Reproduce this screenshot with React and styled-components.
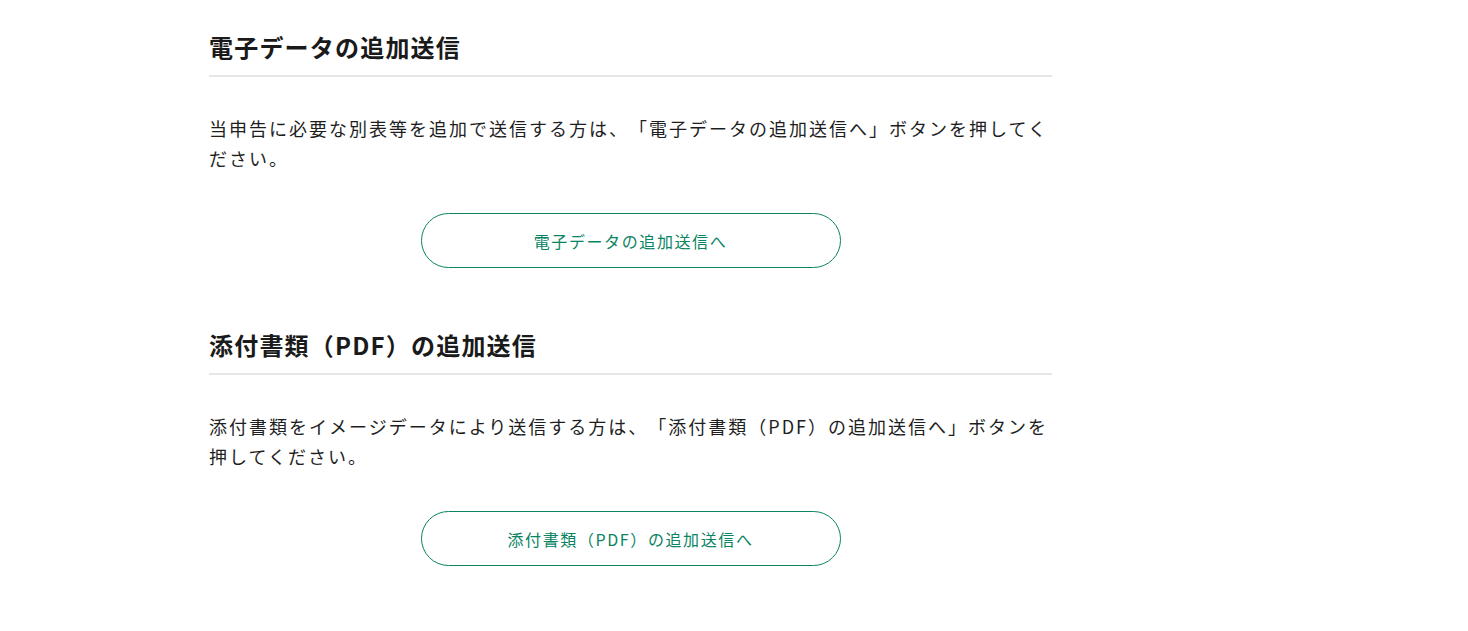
import React from "react";
import styled, { createGlobalStyle } from "styled-components";

const GlobalStyle = createGlobalStyle`
    body {
        margin: 0;
        background: #ffffff;
        font-family: "Noto Sans CJK JP", "Noto Sans", sans-serif;
        color: #222222;
        text-spacing-trim: space-all;
    }
`;

const StyledPage = styled.div`
    display: flex;
    flex-direction: column;
    width: 843px;
    margin-left: 209px;
    padding-top: 29px;
    height: 631px;
    overflow: hidden;
    box-sizing: border-box;
`;

const StyledSection = styled.section`
    display: flex;
    flex-direction: column;
    margin-bottom: 59px;
`;

const StyledHeading = styled.h2`
    margin: 0;
    padding-bottom: 10px;
    font-size: 24px;
    line-height: 36px;
    font-weight: bold;
    letter-spacing: 0.05em;
    color: #1a1a1a;
    border-bottom: 2px solid #e3e7e7;
`;

const StyledText = styled.p`
    margin: 36px 0 0 0;
    font-size: 18px;
    line-height: 30px;
    letter-spacing: 2px;
    color: #1e1e1e;
`;

// lines break where the original page breaks them
const StyledLine = styled.span`
    display: block;
    white-space: nowrap;
`;

const StyledButtonRow = styled.div`
    display: flex;
    justify-content: center;
    margin-top: 40px;
`;

const StyledButton = styled.button`
    width: 420px;
    height: 55px;
    border: 1px solid #0a8463;
    border-radius: 28px;
    background: #ffffff;
    color: #0a8463;
    font-family: "Noto Sans CJK JP", "Noto Sans", sans-serif;
    font-size: 16px;
    letter-spacing: 0.1em;
    text-spacing-trim: space-all;
    cursor: pointer;
`;

const sections = [
    {
        title: "電子データの追加送信",
        text: [
            "当申告に必要な別表等を追加で送信する方は、「電子データの追加送信へ」ボタンを押してく",
            "ださい。",
        ],
        button: "電子データの追加送信へ",
    },
    {
        title: "添付書類（PDF）の追加送信",
        text: [
            "添付書類をイメージデータにより送信する方は、「添付書類（PDF）の追加送信へ」ボタンを",
            "押してください。",
        ],
        button: "添付書類（PDF）の追加送信へ",
    },
];

const App = () => {
    return (
        <>
            <GlobalStyle />
            <StyledPage>
                {sections.map((s) => (
                    <StyledSection key={s.title}>
                        <StyledHeading>{s.title}</StyledHeading>
                        <StyledText>
                            {s.text.map((line) => (
                                <StyledLine key={line}>{line}</StyledLine>
                            ))}
                        </StyledText>
                        <StyledButtonRow>
                            <StyledButton>{s.button}</StyledButton>
                        </StyledButtonRow>
                    </StyledSection>
                ))}
                {/* next section, cut off by the window */}
                <StyledSection>
                    <StyledHeading>送付書等の作成</StyledHeading>
                </StyledSection>
            </StyledPage>
        </>
    );
};

export default App;
